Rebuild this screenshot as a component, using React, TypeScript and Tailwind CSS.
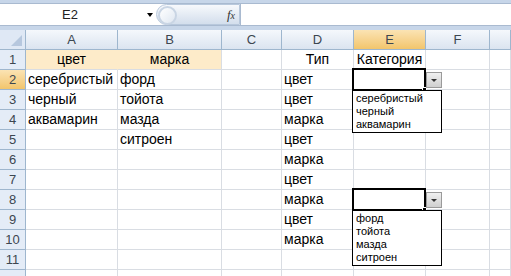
import React from "react";

const font = "font-['Liberation_Sans',Arial,sans-serif]";
const cellCls = "border-b border-r border-[#d9dde3] px-[2px] text-[14px] leading-[19px] text-black whitespace-nowrap";

const colHeads = ["A", "B", "C", "D", "E", "F", ""];

// строки листа: A, B, C, D, E
const rows: string[][] = [
  ["цвет", "марка", "", "Тип", "Категория"],
  ["серебристый", "форд", "", "цвет", ""],
  ["черный", "тойота", "", "цвет", ""],
  ["аквамарин", "мазда", "", "марка", ""],
  ["", "ситроен", "", "цвет", ""],
  ["", "", "", "марка", ""],
  ["", "", "", "цвет", ""],
  ["", "", "", "марка", ""],
  ["", "", "", "цвет", ""],
  ["", "", "", "марка", ""],
  ["", "", "", "", ""],
  ["", "", "", "", ""],
];

function DropButton({ top }: { top: number }) {
  return (
    <div
      className="absolute left-[426px] flex h-[16px] w-[16px] items-center justify-center border border-[#9a9a9a] bg-gradient-to-b from-[#f0f0f0] to-[#cfcfcf]"
      style={{ top }}
    >
      <div className="h-0 w-0 border-x-[3px] border-t-[3px] border-x-transparent border-t-[#333]" />
    </div>
  );
}

function Dropdown({ top, items }: { top: number; items: string[] }) {
  return (
    <>
      <div className="absolute left-[352px] h-[23px] w-[74px] border-2 border-black" style={{ top }} />
      <div className="absolute left-[422px] h-[5px] w-[5px] border border-white bg-black" style={{ top: top + 19 }} />
      <DropButton top={top + 4} />
      <div
        className="absolute left-[352px] w-[90px] border border-black bg-white py-px pl-[3px] text-[11px] leading-[13px] text-black"
        style={{ top: top + 22 }}
      >
        {items.map((it) => (
          <div key={it}>{it}</div>
        ))}
      </div>
    </>
  );
}

export default function App() {
  return (
    <div className={`relative h-[276px] w-[511px] overflow-hidden bg-white ${font}`}>
      {/* строка формул */}
      <div className="h-[30px] bg-[#c7d6e9] pt-[3px]">
        <div className="flex h-[23px] border-y border-[#a9bad0] bg-white">
          <div className="relative flex w-[156px] items-center">
            <span className="w-[140px] text-center text-[13px] text-[#222]">E2</span>
            <div className="absolute left-[147px] top-[9px] h-0 w-0 border-x-[3.5px] border-t-[4px] border-x-transparent border-t-black" />
          </div>
          <div className="relative flex w-[84px] items-center justify-end rounded-l-full border border-[#b8c8dc] bg-gradient-to-b from-[#f7f9fc] to-[#d3deec] pr-[4px]">
            <div className="absolute left-[1px] top-[1px] h-[19px] w-[19px] rounded-full border-2 border-[#c9d5e4] bg-gradient-to-br from-white to-[#dfe7f1]" />
            <span className="font-['Liberation_Serif',serif] text-[13px] italic text-[#333]">
              f<span className="text-[10px]">x</span>
            </span>
          </div>
          <div className="flex-1 border-l border-[#a9bad0]" />
        </div>
      </div>

      {/* сетка */}
      <div className="grid grid-cols-[26px_92px_104px_60px_72px_72px_64px_1fr] auto-rows-[20px]">
        <div className="relative border-b border-r border-[#9eb6ce] bg-[#dfe8f5]">
          <div className="absolute bottom-[3px] right-[3px] h-0 w-0 border-b-[11px] border-l-[11px] border-b-[#b6c7de] border-l-transparent" />
        </div>
        {colHeads.map((h, i) => (
          <div
            key={i}
            className={`flex items-center justify-center border-b border-r border-[#9eb6ce] text-[13px] text-[#3c4650] ${
              h === "E" ? "bg-gradient-to-b from-[#fbe3b3] to-[#f2c56b]" : "bg-gradient-to-b from-[#f5f8fc] to-[#dbe4f0]"
            }`}
          >
            {h}
          </div>
        ))}

        {rows.map((r, ri) => (
          <React.Fragment key={ri}>
            <div
              className={`flex items-center justify-center border-b border-r border-[#9eb6ce] text-[13px] text-[#3c4650] ${
                ri === 1 ? "bg-gradient-to-b from-[#fbe3b3] to-[#f2c56b]" : "bg-[#e4ecf7]"
              }`}
            >
              {ri < 11 ? ri + 1 : ""}
            </div>
            {r.map((v, ci) => {
              const head = ri === 0;
              const fill = head && ci < 2;
              return (
                <div
                  key={ci}
                  className={`${cellCls} ${head ? "text-center" : ""} ${fill ? "bg-[#fdebc9]" : ""} ${
                    fill && ci === 0 ? "border-r-[#fdebc9]" : ""
                  }`}
                >
                  {v}
                </div>
              );
            })}
            <div className={cellCls} />
            <div className={cellCls} />
          </React.Fragment>
        ))}
      </div>

      <Dropdown top={68} items={["серебристый", "черный", "аквамарин"]} />
      <Dropdown top={188} items={["форд", "тойота", "мазда", "ситроен"]} />
    </div>
  );
}
